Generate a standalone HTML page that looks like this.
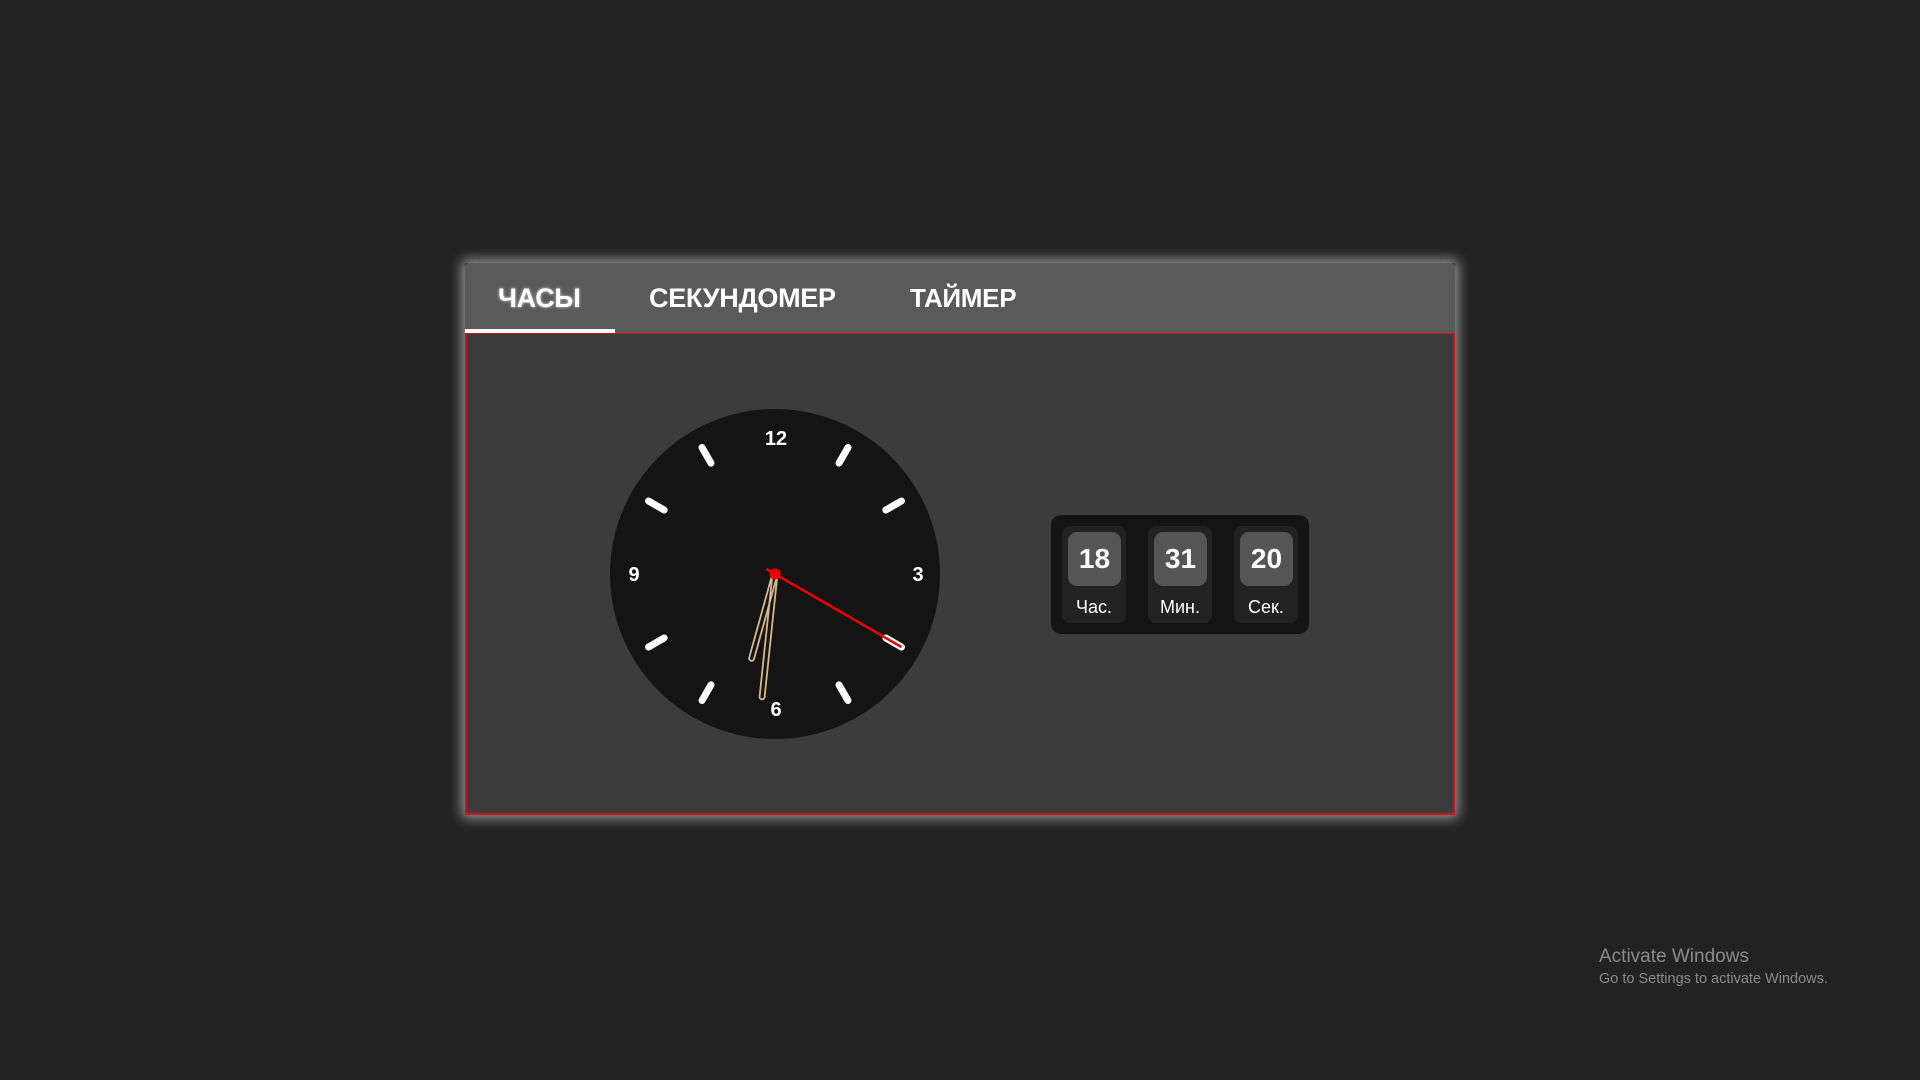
<!DOCTYPE html>
<html><head><meta charset="utf-8"><style>
*{margin:0;padding:0;box-sizing:border-box}
body{width:1920px;height:1080px;background:#222;font-family:"Liberation Sans",sans-serif;position:relative;overflow:hidden}
.card{position:absolute;left:465px;top:263px;width:990px;height:552px;background:#3c3c3c;box-shadow:0 0 12px 3px rgba(255,255,255,.55)}
.tabs{position:absolute;left:0;top:0;width:990px;height:70px;background:#5a5a5a;border-radius:4px 4px 0 0}
.tab{position:absolute;top:0;height:70px;line-height:70px;color:#fff;font-weight:bold;font-size:26px;letter-spacing:-0.3px}
.ul{position:absolute;left:0;top:66px;width:150px;height:4px;background:#fff}
.body{position:absolute;left:0;top:70px;width:990px;height:482px;border:2px solid #c8161c;border-top:1px solid #c8161c}
.dig{position:absolute;left:1051px;top:515px;width:258px;height:119px;background:#141414;border-radius:10px}
.col{position:absolute;top:11px;width:64px;height:97px;background:#222;border-radius:8px}
.num{position:absolute;left:6px;top:6px;width:53px;height:54px;background:#555;border-radius:9px;color:#fff;font-weight:bold;font-size:28px;text-align:center;line-height:54px}
.lab{position:absolute;left:0;width:64px;top:71px;text-align:center;color:#fff;font-size:18px}
.act{position:absolute;left:1599px;top:946px;color:#8a8a8a}
</style></head><body>
<div class="card">
 <div class="tabs">
  <div class="tab" style="left:33px;text-shadow:0 0 3px rgba(255,255,255,.7);font-size:27px">ЧАСЫ</div>
  <div class="tab" style="left:184px;font-size:27px">СЕКУНДОМЕР</div>
  <div class="tab" style="left:445px">ТАЙМЕР</div>
  <div class="ul"></div>
 </div>
 <div class="body"></div>
</div>
<svg style="position:absolute;left:0;top:0" width="1920" height="1080">
 <circle cx="775" cy="574" r="165" fill="#141414"/>
 <g stroke="#fff" stroke-width="7" stroke-linecap="round">
  <g transform="translate(775 574)">
   <line x1="0" y1="-128" x2="0" y2="-146" transform="rotate(30)"/>
   <line x1="0" y1="-128" x2="0" y2="-146" transform="rotate(60)"/>
   <line x1="0" y1="-128" x2="0" y2="-146" transform="rotate(120)"/>
   <line x1="0" y1="-128" x2="0" y2="-146" transform="rotate(150)"/>
   <line x1="0" y1="-128" x2="0" y2="-146" transform="rotate(210)"/>
   <line x1="0" y1="-128" x2="0" y2="-146" transform="rotate(240)"/>
   <line x1="0" y1="-128" x2="0" y2="-146" transform="rotate(300)"/>
   <line x1="0" y1="-128" x2="0" y2="-146" transform="rotate(330)"/>
  </g>
 </g>
 <g fill="#fff" font-family="Liberation Sans" font-weight="bold" font-size="20" text-anchor="middle">
  <text x="776" y="445">12</text>
  <text x="918" y="581">3</text>
  <text x="776" y="716">6</text>
  <text x="634" y="581">9</text>
 </g>
 <g transform="translate(775 574)" fill="none" stroke="#d9b88a" stroke-width="1.8">
  <rect x="-2.5" y="-90" width="5" height="92" rx="2.5" transform="rotate(195.5)"/>
  <rect x="-2.5" y="-126" width="5" height="128" rx="2.5" transform="rotate(186)"/>
 </g>
 <g transform="translate(775 574) rotate(120)">
  <line x1="0" y1="10" x2="0" y2="-146" stroke="#e00" stroke-width="2.5"/>
 </g>
 <circle cx="775" cy="574" r="5.5" fill="#e00"/>
</svg>
<div class="dig">
 <div class="col" style="left:11px"><div class="num">18</div><div class="lab">Час.</div></div>
 <div class="col" style="left:97px"><div class="num">31</div><div class="lab">Мин.</div></div>
 <div class="col" style="left:183px"><div class="num">20</div><div class="lab">Сек.</div></div>
</div>
<div class="act"><div style="font-size:19px">Activate Windows</div><div style="font-size:14.5px;margin-top:3px">Go to Settings to activate Windows.</div></div>
</body></html>
